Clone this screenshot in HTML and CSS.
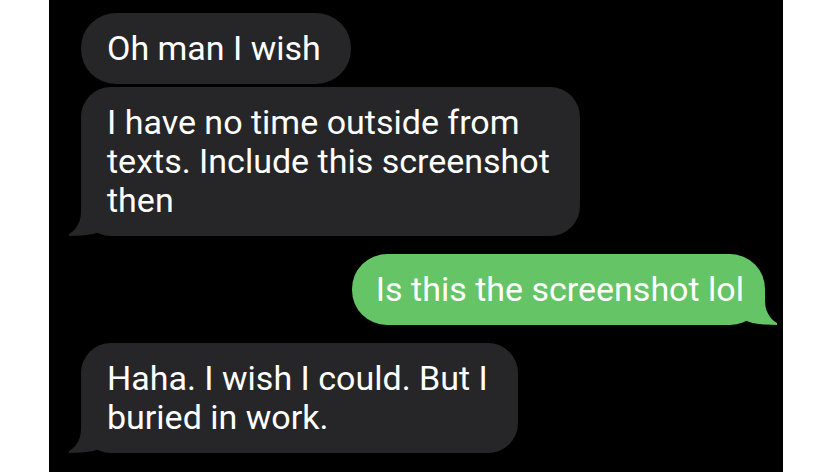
FILE: index.html
```html
<!DOCTYPE html>
<html lang="en">
<head>
<meta charset="utf-8">
<title>Messages</title>
<link rel="stylesheet" href="styles.css">
</head>
<body>
<main class="thread">
  <div class="group">
    <p class="bubble in single">Oh man I wish</p>
    <p class="bubble in tail">I have no time outside from<br>texts. Include this screenshot<br>then</p>
  </div>
  <div class="group">
    <p class="bubble out single tail">Is this the screenshot lol</p>
  </div>
  <div class="group">
    <p class="bubble in tail">Haha. I wish I could. But I<br>buried in work.</p>
  </div>
</main>
</body>
</html>
```
FILE: styles.css
```css
html, body {
  margin: 0;
  padding: 0;
  background: #ffffff;
}

.thread {
  margin-left: 49px;
  width: 734px;
  height: 472px;
  box-sizing: border-box;
  background: #000000;
  padding: 13px 18px 0 32px;
  display: flex;
  flex-direction: column;
  gap: 18px;
  overflow: hidden;
}

.group {
  display: flex;
  flex-direction: column;
  gap: 3px;
}

.bubble {
  position: relative;
  margin: 0;
  width: fit-content;
  box-sizing: border-box;
  padding: 16px 30px 16px 26px;
  border-radius: 30px;
  font-family: Roboto, "Liberation Sans", sans-serif;
  font-size: 34px;
  line-height: 39px;
  color: #ffffff;
  background: #262628;
  white-space: nowrap;
}

.bubble.single {
  border-radius: 35px;
}

.bubble.in {
  align-self: flex-start;
}

.bubble.out {
  align-self: flex-end;
  padding: 16px 21px 16px 24px;
  background: #65c466;
}

.bubble.tail::before,
.bubble.tail::after {
  content: "";
  position: absolute;
  bottom: 0;
  height: 36px;
}

.bubble.in.tail::before {
  left: -12px;
  width: 32px;
  background: #262628;
  border-bottom-right-radius: 32px 6px;
}

.bubble.in.tail::after {
  left: -32px;
  width: 32px;
  background: #000000;
  border-bottom-right-radius: 20px 24px;
}

.bubble.out.tail::before {
  right: -12px;
  width: 32px;
  background: #65c466;
  border-bottom-left-radius: 32px 6px;
}

.bubble.out.tail::after {
  right: -32px;
  width: 32px;
  background: #000000;
  border-bottom-left-radius: 20px 24px;
}
```
